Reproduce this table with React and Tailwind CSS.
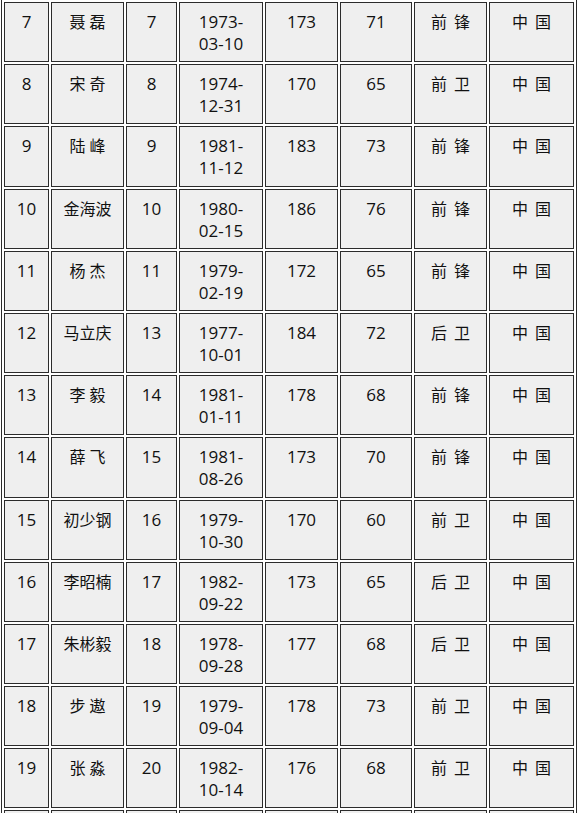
const ROWS = [
  ["7", "聂磊", "7", "1973-", "03-10", "173", "71", "前锋"],
  ["8", "宋奇", "8", "1974-", "12-31", "170", "65", "前卫"],
  ["9", "陆峰", "9", "1981-", "11-12", "183", "73", "前锋"],
  ["10", "金海波", "10", "1980-", "02-15", "186", "76", "前锋"],
  ["11", "杨杰", "11", "1979-", "02-19", "172", "65", "前锋"],
  ["12", "马立庆", "13", "1977-", "10-01", "184", "72", "后卫"],
  ["13", "李毅", "14", "1981-", "01-11", "178", "68", "前锋"],
  ["14", "薛飞", "15", "1981-", "08-26", "173", "70", "前锋"],
  ["15", "初少钢", "16", "1979-", "10-30", "170", "60", "前卫"],
  ["16", "李昭楠", "17", "1982-", "09-22", "173", "65", "后卫"],
  ["17", "朱彬毅", "18", "1978-", "09-28", "177", "68", "后卫"],
  ["18", "步遨", "19", "1979-", "09-04", "178", "73", "前卫"],
  ["19", "张淼", "20", "1982-", "10-14", "176", "68", "前卫"],
];

function Cell({ children }) {
  return (
    <div className="border border-[#2b2b2b] bg-[#efefef] pt-[8px] text-center text-[17px] leading-[22px] text-[#111]">
      {children}
    </div>
  );
}

function Han({ text, gap }) {
  // two-char names are spaced out, three-char ones are set solid
  if (text.length === 2) {
    return (
      <span className={`text-[16px] ${gap === "wide" ? "tracking-[7px] mr-[-7px]" : "tracking-[4px] mr-[-4px]"}`}>
        {text}
      </span>
    );
  }
  return <span className="text-[16px]">{text}</span>;
}

export default function App() {
  return (
    <div className="h-[813px] overflow-hidden bg-white font-['Open_Sans','Noto_Sans_CJK_SC',sans-serif]">
      <div className="ml-[1px] w-[576px] border-x border-[#2b2b2b] px-[2px] pt-[2px]">
        <div className="grid grid-cols-[45px_73px_51px_84px_73px_72px_73px_85px] auto-rows-[60.2px] gap-[2px]">
          {ROWS.map((r) => (
            <div key={r[0]} className="contents">
              <Cell>{r[0]}</Cell>
              <Cell>
                <Han text={r[1]} />
              </Cell>
              <Cell>{r[2]}</Cell>
              <Cell>
                {r[3]}
                <br />
                {r[4]}
              </Cell>
              <Cell>{r[5]}</Cell>
              <Cell>{r[6]}</Cell>
              <Cell>
                <Han text={r[7]} gap="wide" />
              </Cell>
              <Cell>
                <Han text="中国" gap="wide" />
              </Cell>
            </div>
          ))}
          {/* next row, only its top edge shows */}
          {Array.from({ length: 8 }).map((_, i) => (
            <Cell key={`n${i}`} />
          ))}
        </div>
      </div>
    </div>
  );
}
